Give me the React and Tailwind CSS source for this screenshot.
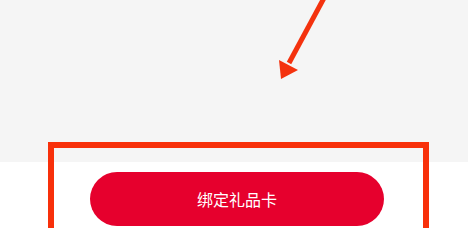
import React from 'react';

const Arrow = () => (
  <svg className="absolute left-0 top-0" width="468" height="100" viewBox="0 0 468 100">
    <line x1="324" y1="-2" x2="289" y2="63" stroke="#f4320e" strokeWidth="5" />
    <polygon points="281,79 279,60 298,70" fill="#f4320e" />
  </svg>
);

const App = () => {
  return (
    <div className="relative w-[468px] h-[228px] overflow-hidden bg-white" style={{ fontFamily: '"Noto Sans CJK SC", "Noto Sans", sans-serif' }}>
      <div className="h-[162px] bg-[#f5f5f5]" />
      <div className="flex pl-[90px] pt-[10px]">
        <button className="w-[294px] h-[54px] rounded-full bg-[#e6002d] text-white text-[16px] flex items-center justify-center">
          绑定礼品卡
        </button>
      </div>
      <Arrow />
      <div className="absolute left-[48px] top-[142px] w-[381px] h-[100px] border-[6px] border-[#f8300a]" />
    </div>
  );
};

export default App;
